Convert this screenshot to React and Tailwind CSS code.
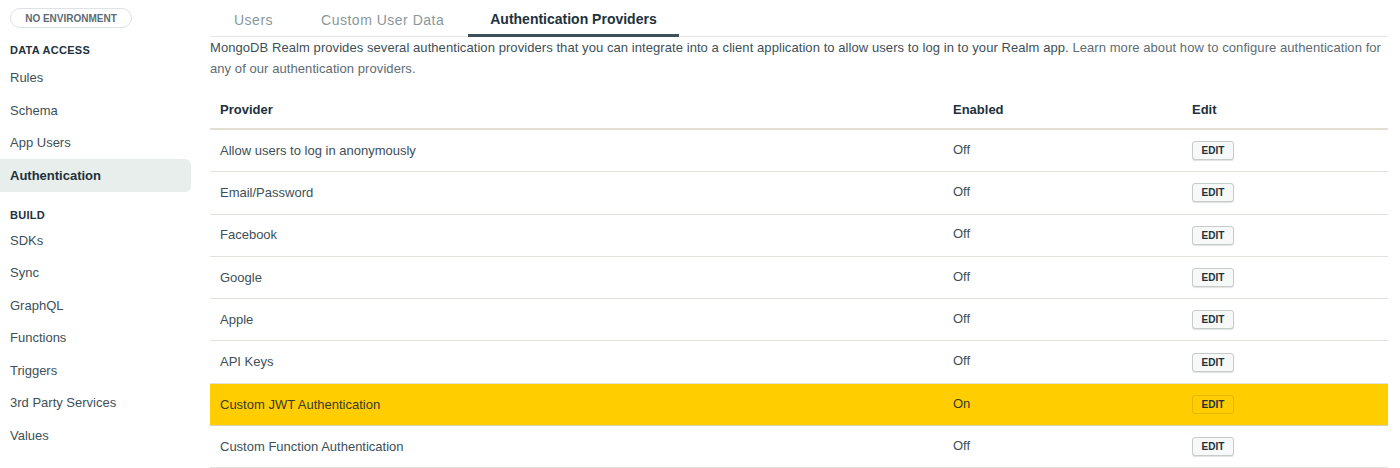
const dataAccess = ['Rules', 'Schema', 'App Users', 'Authentication']
const build = ['SDKs', 'Sync', 'GraphQL', 'Functions', 'Triggers', '3rd Party Services', 'Values']

const providers = [
  { name: 'Allow users to log in anonymously', enabled: false },
  { name: 'Email/Password', enabled: false },
  { name: 'Facebook', enabled: false },
  { name: 'Google', enabled: false },
  { name: 'Apple', enabled: false },
  { name: 'API Keys', enabled: false },
  { name: 'Custom JWT Authentication', enabled: true },
  { name: 'Custom Function Authentication', enabled: false },
]

const NavItem = ({ label, active }) => (
  <div
    className={`flex h-[32.5px] items-center pl-[10px] text-[13px] ${
      active ? 'rounded-r-md bg-[#e7eeec] font-bold text-[#21313c]' : 'text-[#3d4f58]'
    }`}
  >
    {label}
  </div>
)

export default function App() {
  return (
    <div
      className="flex h-[468px] w-[1400px] overflow-hidden bg-white text-[#3d4f58]"
      style={{ fontFamily: '"Liberation Sans", Arial, sans-serif' }}
    >
      <aside className="w-[191px] shrink-0">
        <div className="flex pl-[10px] pt-[8px]">
          <span className="flex h-[20px] w-[122px] items-center justify-center rounded-full border border-[#dde3e2] text-[10px] font-bold text-[#5d6c74]">
            NO ENVIRONMENT
          </span>
        </div>
        <div className="mt-[14px] pl-[10px] text-[11px] font-bold tracking-wide text-[#21313c]">DATA ACCESS</div>
        <div className="mt-[3px]">
          {dataAccess.map((item) => (
            <NavItem key={item} label={item} active={item === 'Authentication'} />
          ))}
        </div>
        <div className="mt-[15px] pl-[10px] text-[11px] font-bold tracking-wide text-[#21313c]">BUILD</div>
        <div className="mt-[1px]">
          {build.map((item) => (
            <NavItem key={item} label={item} />
          ))}
        </div>
      </aside>

      <main className="ml-[19px] w-[1178px]">
        <div className="flex h-[37px] items-end border-b border-[#e4e8e7]">
          <div className="flex h-full items-center px-[24px] pt-[4px] text-[14px] tracking-[0.5px] text-[#89979b]">Users</div>
          <div className="flex h-full items-center px-[24px] pt-[4px] text-[14px] tracking-[0.5px] text-[#89979b]">
            Custom User Data
          </div>
          <div className="-mb-px flex h-[38px] items-center border-b-[3px] border-[#3d4f58] px-[22px] pt-[5px] text-[14px] font-bold text-[#21313c]">
            Authentication Providers
          </div>
        </div>
        <p className="text-[13px] leading-[21px] tracking-[0.07px] text-[#3d4f58]">
          MongoDB Realm provides several authentication providers that you can integrate into a client application to allow
          users to log in to your Realm app.{' '}
          <span className="text-[#5d6c74]">Learn more about how to configure authentication for any of our authentication providers.</span>
        </p>

        <div className="mt-[13px]">
          <div className="flex h-[38px] items-center border-b-2 border-[#e2ded2] text-[13px] font-bold text-[#21313c]">
            <div className="w-[743px] pl-[10px]">Provider</div>
            <div className="w-[239px]">Enabled</div>
            <div>Edit</div>
          </div>
          {providers.map((p) => (
            <div
              key={p.name}
              className={`flex h-[42.3px] items-center border-b text-[13px] ${
                p.enabled ? 'border-[#d7d2b8] bg-[#ffcd00] text-[#3a3a2a]' : 'border-[#e2e2dc] text-[#3d4f58]'
              }`}
            >
              <div className="w-[743px] pl-[10px]">{p.name}</div>
              <div className="w-[239px] -translate-y-[1px]">{p.enabled ? 'On' : 'Off'}</div>
              <div>
                <button
                  type="button"
                  className={`flex h-[19px] w-[42px] items-center justify-center rounded-[3px] border text-[10px] font-bold text-[#21313c] ${
                    p.enabled ? 'border-[#e2b800] bg-[#ffcd00]' : 'border-[#c5cccb] bg-[#f7f8f8] shadow-[0_1px_1px_rgba(0,0,0,0.12)]'
                  }`}
                >
                  EDIT
                </button>
              </div>
            </div>
          ))}
        </div>
      </main>
    </div>
  )
}
